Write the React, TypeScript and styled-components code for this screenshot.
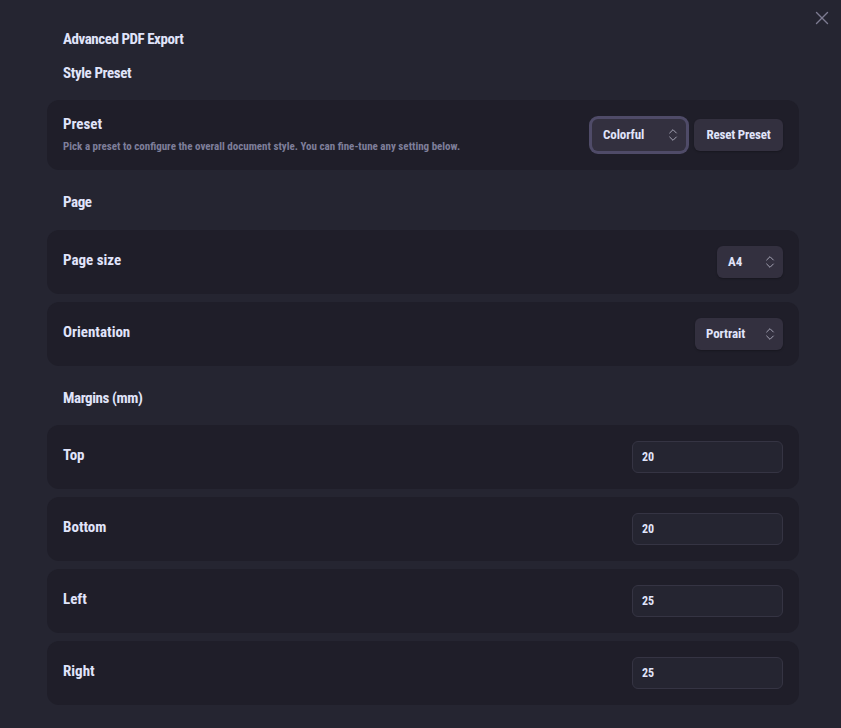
import React from "react"
import styled, { createGlobalStyle } from "styled-components"
import { ChevronsUpDown, X } from "lucide-react"

const FONT = `"Liberation Sans Narrow", "Roboto Condensed", "DejaVu Sans Condensed", "Liberation Sans", sans-serif`

const GlobalStyle = createGlobalStyle`
  html, body {
    margin: 0;
    padding: 0;
    background: #252531;
  }
  * {
    box-sizing: border-box;
  }
`

const Dialog = styled.div`
  position: relative;
  width: 841px;
  height: 728px;
  overflow: hidden;
  padding: 29px 42px 0 47px;
  background: #252531;
  font-family: ${FONT};
  color: #e0e4fa;
`

const CloseButton = styled.button`
  position: absolute;
  top: 7px;
  right: 8px;
  width: 22px;
  height: 22px;
  padding: 0;
  border: 0;
  background: none;
  color: #7d7b92;
  display: flex;
`

const Title = styled.div`
  padding-left: 16px;
  font-size: 15px;
  font-weight: 700;
  letter-spacing: -0.45px;
  line-height: 20px;
  margin-bottom: 14px;
`

const SectionTitle = styled.div<{ $top?: number; $bottom: number }>`
  padding-left: 16px;
  font-size: 15px;
  font-weight: 700;
  letter-spacing: -0.4px;
  line-height: 20px;
  margin-top: ${(p) => p.$top ?? 22}px;
  margin-bottom: ${(p) => p.$bottom}px;
`

const Stack = styled.div`
  display: flex;
  flex-direction: column;
  gap: 8px;
`

const Card = styled.div`
  display: flex;
  align-items: center;
  justify-content: space-between;
  padding: 16px;
  border-radius: 12px;
  background: #1f1e29;
`

const LabelBox = styled.div`
  display: flex;
  flex-direction: column;
`

const Label = styled.div`
  font-size: 15px;
  font-weight: 700;
  line-height: 16px;
`

const Hint = styled.div`
  font-size: 11px;
  font-weight: 700;
  line-height: 18px;
  margin: 6px 0 -2px;
  color: #7e7e9a;
`

const LabelOnly = styled(Label)`
  margin-bottom: 4px;
`

const Controls = styled.div`
  display: flex;
  align-items: center;
  gap: 8px;
`

const Select = styled.div<{ $width: number; $focused?: boolean }>`
  width: ${(p) => p.$width}px;
  height: 32px;
  display: flex;
  align-items: center;
  justify-content: space-between;
  padding: 0 5px 2px 11px;
  border-radius: 6px;
  background: #33303f;
  font-size: 13px;
  font-weight: 700;
  letter-spacing: -0.1px;
  box-shadow: ${(p) =>
    p.$focused ? "0 0 0 3px #4f4b68" : "0 1px 2px rgba(0, 0, 0, 0.25)"};
  svg {
    color: #a5a4b5;
    margin-top: 2px;
  }
`

const ResetButton = styled.button`
  width: 89px;
  height: 32px;
  padding: 0 0 2px;
  border: 0;
  border-radius: 6px;
  background: #33303f;
  color: #e0e4fa;
  font-family: ${FONT};
  font-size: 13px;
  font-weight: 700;
  letter-spacing: -0.2px;
  box-shadow: 0 1px 2px rgba(0, 0, 0, 0.25);
`

const NumberInput = styled.div`
  width: 151px;
  height: 32px;
  display: flex;
  align-items: center;
  padding: 0 9px;
  border: 1px solid #353443;
  border-radius: 6px;
  background: #252531;
  font-size: 12px;
  font-weight: 700;
`

const margins = [
  { label: "Top", value: "20" },
  { label: "Bottom", value: "20" },
  { label: "Left", value: "25" },
  { label: "Right", value: "25" },
]

const App = () => {
  return (
    <Dialog>
      <GlobalStyle />
      <CloseButton>
        <X size={22} strokeWidth={1.5} />
      </CloseButton>
      <Title>Advanced PDF Export</Title>
      <SectionTitle $top={0} $bottom={17}>
        Style Preset
      </SectionTitle>
      <Card>
        <LabelBox>
          <Label>Preset</Label>
          <Hint>
            Pick a preset to configure the overall document style. You can
            fine-tune any setting below.
          </Hint>
        </LabelBox>
        <Controls>
          <Select $width={94} $focused>
            Colorful
            <ChevronsUpDown size={16} strokeWidth={1.5} />
          </Select>
          <ResetButton>Reset Preset</ResetButton>
        </Controls>
      </Card>

      <SectionTitle $bottom={18}>Page</SectionTitle>
      <Stack>
        <Card>
          <LabelOnly>Page size</LabelOnly>
          <Select $width={66}>
            A4
            <ChevronsUpDown size={16} strokeWidth={1.5} />
          </Select>
        </Card>
        <Card>
          <LabelOnly>Orientation</LabelOnly>
          <Select $width={88}>
            Portrait
            <ChevronsUpDown size={16} strokeWidth={1.5} />
          </Select>
        </Card>
      </Stack>

      <SectionTitle $bottom={17}>Margins (mm)</SectionTitle>
      <Stack>
        {margins.map((m) => (
          <Card key={m.label}>
            <LabelOnly>{m.label}</LabelOnly>
            <NumberInput>{m.value}</NumberInput>
          </Card>
        ))}
      </Stack>
    </Dialog>
  )
}

export default App
